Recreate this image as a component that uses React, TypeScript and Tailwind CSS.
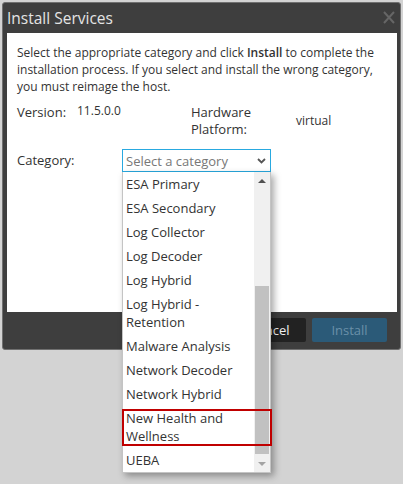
export default function App() {
  const items: { label: React.ReactNode }[] = [
    { label: "ESA Primary" },
    { label: "ESA Secondary" },
    { label: "Log Collector" },
    { label: "Log Decoder" },
    { label: "Log Hybrid" },
    { label: <>Log Hybrid -<br />Retention</> },
    { label: "Malware Analysis" },
    { label: "Network Decoder" },
    { label: "Network Hybrid" },
    { label: <>New Health and<br />Wellness</> },
    { label: "UEBA" },
  ];
  return (
    <div className="w-[403px] h-[484px] bg-[#d3d3d3] pt-[2px] pl-[2px] font-['Open_Sans',sans-serif] overflow-hidden">
      <div className="w-[399px] h-[348px] bg-[#3e3e3e] border border-[#707070] rounded-[3px] flex flex-col">
        <div className="h-[30px] flex items-center justify-between pl-[4px] pr-[5px]">
          <span className="text-[15.5px] leading-[20px] text-[#e4e4e4]">Install Services</span>
          <svg width="12" height="13" viewBox="0 0 12 13" className="mb-[2px]">
            <path d="M1 1 L11 12 M11 1 L1 12" stroke="#666" strokeWidth="2" fill="none" />
          </svg>
        </div>
        <div className="ml-[4px] mr-[3px] h-[279px] bg-white px-[10px] pt-[11px] text-[13px] leading-[17px] text-[#333]">
          <p className="whitespace-nowrap text-[12px]">
            Select the appropriate category and click <span className="font-semibold">Install</span> to complete the
            <br />
            installation process. If you select and install the wrong category,
            <br />
            you must reimage the host.
          </p>
          <div className="mt-[9px] flex">
            <div className="w-[60px]">Version:</div>
            <div className="w-[114px] text-[12px] leading-[14px]">11.5.0.0</div>
            <div className="w-[105px]">
              Hardware
              <br />
              Platform:
            </div>
            <div className="self-center text-[12px] leading-[14px]">virtual</div>
          </div>
          <div className="mt-[11px] flex items-center">
            <div className="w-[105px]">Category:</div>
            <div className="relative">
              <div className="w-[149px] h-[23px] border border-[#29a9e0] bg-white flex items-center justify-between pl-[3px] pr-[4px]">
                <span className="text-[13px] leading-[18px] text-[#777]">Select a category</span>
                <svg width="9" height="6" viewBox="0 0 9 6">
                  <path d="M1 1 L4.5 4.5 L8 1" stroke="#555" strokeWidth="1.8" fill="none" />
                </svg>
              </div>
              <div className="absolute left-0 top-[23px] w-[149px] h-[301px] bg-white border-x border-b border-[#c4c4c4] shadow-[3px_3px_7px_rgba(0,0,0,0.35)] flex z-10">
                <div className="flex-1 flex flex-col pl-[3px] pr-[4px] text-[13px] leading-[18px] text-[#333] whitespace-nowrap">
                  {items.map((it, i) => (
                    <div key={i} className="py-[3px]">
                      {it.label}
                    </div>
                  ))}
                </div>
                <div className="w-[16px] bg-[#f0f0f0] flex flex-col">
                  <div className="h-[17px] flex items-center justify-center">
                    <div className="w-0 h-0 border-l-[4px] border-r-[4px] border-b-[4px] border-l-transparent border-r-transparent border-b-[#505050]" />
                  </div>
                  <div className="flex-1 pt-[97px]">
                    <div className="h-[168px] mx-[1px] bg-[#c1c1c1]" />
                  </div>
                  <div className="h-[17px] flex items-center justify-center">
                    <div className="w-0 h-0 border-l-[4px] border-r-[4px] border-t-[4px] border-l-transparent border-r-transparent border-t-[#a3a3a3]" />
                  </div>
                </div>
                <div className="absolute left-[-1px] top-[237px] w-[150px] h-[37px] border-2 border-[#c00000]" />
              </div>
            </div>
          </div>
        </div>
        <div className="flex-1 flex justify-end items-start pt-[6px] pr-[13px] gap-[6px]">
          <button className="w-[73px] h-[24px] rounded-[2px] bg-[#222] text-[#f0f0f0] text-[13px] leading-[18px]">Cancel</button>
          <button className="w-[75px] h-[24px] rounded-[2px] bg-[#2b5a78] text-[#6a90a8] text-[13px] leading-[18px]">Install</button>
        </div>
      </div>
    </div>
  );
}
